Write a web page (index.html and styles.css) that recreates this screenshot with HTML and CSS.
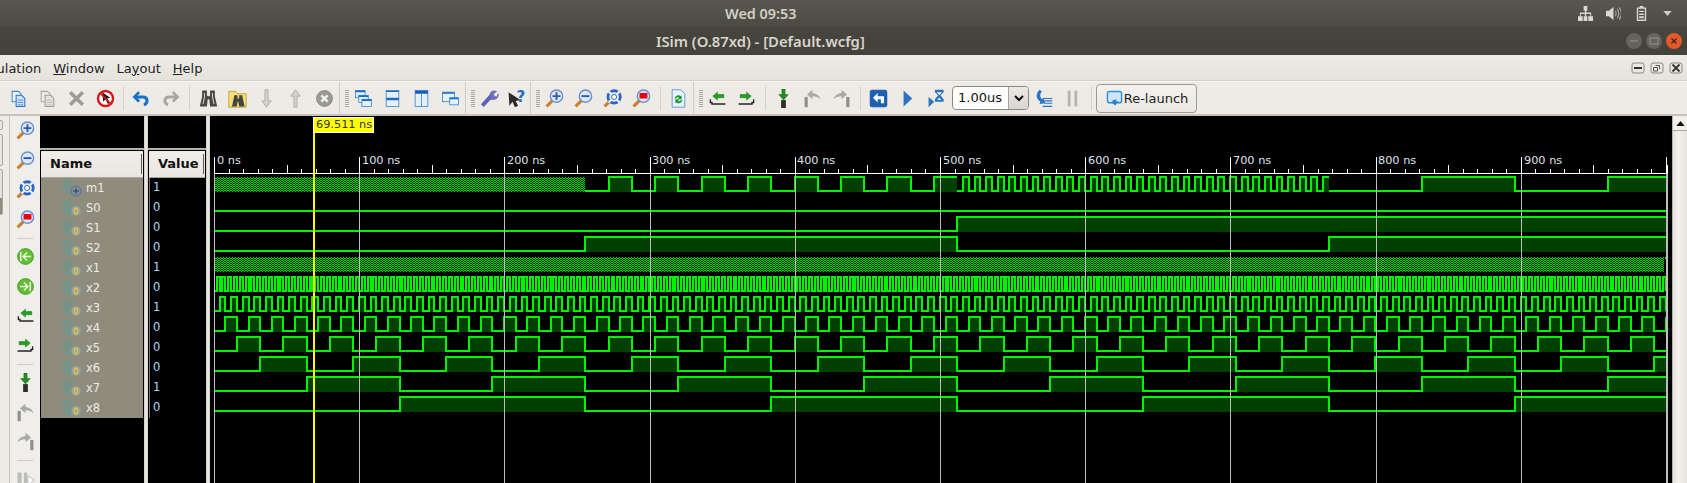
FILE: index.html
```html
<!DOCTYPE html>
<html lang="en">
<head>
<meta charset="utf-8">
<title>ISim (O.87xd) - [Default.wcfg]</title>
<link rel="stylesheet" href="styles.css">
</head>
<body>
<svg class="defs" width="0" height="0" aria-hidden="true">
  <defs>
    <symbol id="doc" viewBox="0 0 24 24"><path d="M4 3h8l3 3v10H4z" fill="#f2f6fc" stroke="#3f86d4" stroke-width="1.300"/><path d="M9 8h7l4 4v10H9z" fill="#d3e4f8" stroke="#2272c8" stroke-width="1.300"/><path d="M11 14h7M11 17h7M11 20h7" stroke="#4a94dc" stroke-width="1.200"/></symbol>
    <symbol id="paste" viewBox="0 0 24 24"><path d="M4 3h8l3 3v10H4z" fill="#ecebe8" stroke="#a8a7a2" stroke-width="1.300"/><path d="M9 8h7l4 4v10H9z" fill="#e4e3df" stroke="#9c9b96" stroke-width="1.300"/><path d="M11 14h7M11 17h7M11 20h7" stroke="#b4b3ae"/></symbol>
    <symbol id="del" viewBox="0 0 24 24"><path d="M4 4l16 16M20 4L4 20" stroke="#9b9b97" stroke-width="4.500"/></symbol>
    <symbol id="no" viewBox="0 0 24 24"><circle cx="12" cy="12" r="9.500" fill="#fff" stroke="#dd1414" stroke-width="3"/><path d="M8 4l1 12 3-3 3 6 2-1-3-6 4-1z" fill="#1c1c1c"/><path d="M6 6l12 12" stroke="#dd1414" stroke-width="2.200"/></symbol>
    <symbol id="undo" viewBox="0 0 24 24"><path d="M9 4L3 10l6 6" fill="none" stroke="#1272cc" stroke-width="3.400"/><path d="M5 10h9c6 0 7 8 1 10" fill="none" stroke="#1272cc" stroke-width="3.800"/></symbol>
    <symbol id="redo" viewBox="0 0 24 24"><path d="M15 4l6 6-6 6" fill="none" stroke="#a6a6a2" stroke-width="3.400"/><path d="M19 10h-9c-6 0-7 8-1 10" fill="none" stroke="#a6a6a2" stroke-width="3.800"/></symbol>
    <symbol id="bino" viewBox="0 0 24 24"><path d="M4 2h6v6l1 1h2l1-1V2h6v7l3 13h-9l-1-9h-2l-1 9H1L4 9z" fill="#474744"/><path d="M7 5v5L5 19M17 5v5l2 9" stroke="#d0d0cc" stroke-width="1.300" fill="none"/></symbol>
    <symbol id="fbino" viewBox="0 0 24 24"><path d="M1 3h9l2 3h11v17H1z" fill="#f6de76" stroke="#b79a2e"/><path d="M8 8h4v4h2V8h4l1 5 2 9h-7l-1-6h-1l-1 6H5l2-9z" fill="#45453f"/></symbol>
    <symbol id="down" viewBox="0 0 24 24"><path d="M10 1h4v14h4l-6 8-6-8h4z" fill="#d2d1cc" stroke="#a8a7a2"/></symbol>
    <symbol id="up" viewBox="0 0 24 24"><path d="M10 23h4V9h4l-6-8-6 8h4z" fill="#d2d1cc" stroke="#a8a7a2"/></symbol>
    <symbol id="stop" viewBox="0 0 24 24"><circle cx="12" cy="12" r="10" fill="#9a9a96" stroke="#7d7d79"/><path d="M8 8l8 8M16 8l-8 8" stroke="#f2f2ee" stroke-width="3"/></symbol>
    <symbol id="w1" viewBox="0 0 24 24"><g fill="#e6f0fb" stroke="#2f82d4"><rect x="2" y="2" width="12" height="9"/><rect x="6" y="8" width="12" height="9"/><rect x="10" y="13" width="12" height="9"/></g><path d="M2 3h12M6 9h12M10 14h12" stroke="#1a6cc0" stroke-width="2"/></symbol>
    <symbol id="w2" viewBox="0 0 24 24"><rect x="4" y="2" width="16" height="20" fill="#e6f0fb" stroke="#2f82d4"/><path d="M4 3h16M4 12h16M4 13.500h16" stroke="#1a6cc0" stroke-width="1.600"/></symbol>
    <symbol id="w3" viewBox="0 0 24 24"><rect x="4" y="2" width="16" height="20" fill="#e6f0fb" stroke="#2f82d4"/><path d="M4 4h16" stroke="#1a5cb0" stroke-width="4"/><path d="M12 5v17" stroke="#2f82d4"/></symbol>
    <symbol id="w4" viewBox="0 0 24 24"><g fill="#e6f0fb" stroke="#2f82d4"><rect x="2" y="4" width="15" height="12"/><rect x="11" y="11" width="11" height="9"/></g><path d="M2 5h15M11 12h11" stroke="#1a6cc0" stroke-width="2"/></symbol>
    <symbol id="wrench" viewBox="0 0 24 24"><path d="M3 21l11-12" stroke="#5e62b4" stroke-width="5"/><path d="M13 10c-2-6 3-9 8-7l-4 3 1 3 3 1 2-4c1 6-5 9-10 7z" fill="#6a6fc0" stroke="#4b4f9e" stroke-width=".6"/></symbol>
    <symbol id="help" viewBox="0 0 24 24"><path d="M2 4l1 17 4-5 3 7 4-2-3-6 6-1z" fill="#2a2a2a"/><text x="12" y="16" font-family="DejaVu Sans" font-weight="700" font-size="19" fill="#1e6fc4">?</text></symbol>
    <symbol id="lens" viewBox="0 0 24 24"><path d="M2 22l8-8" stroke="#cb7f2a" stroke-width="3.800"/><circle cx="14.500" cy="9" r="7.800" fill="#dde8f8" stroke="#6c8fd0" stroke-width="1.800"/></symbol>
    <symbol id="zi" viewBox="0 0 24 24"><use href="#lens"/><path d="M9.500 9h10M14.500 4v10" stroke="#2b5bb0" stroke-width="2.400"/></symbol>
    <symbol id="zo" viewBox="0 0 24 24"><use href="#lens"/><path d="M9.500 9h10" stroke="#2b5bb0" stroke-width="2.400"/></symbol>
    <symbol id="zf" viewBox="0 0 24 24"><use href="#lens"/><circle cx="14" cy="10" r="9.500" fill="#2d64c4"/><circle cx="14" cy="10" r="6" fill="#e8f0fb"/><path d="M7 3l14 14M21 3L7 17" stroke="#e8f0fb" stroke-width="2.800"/><circle cx="14" cy="10" r="3.200" fill="#fff" stroke="#2d64c4" stroke-width="1.200"/></symbol>
    <symbol id="zr" viewBox="0 0 24 24"><use href="#lens"/><rect x="9.500" y="5" width="10" height="7" fill="#e8000c"/></symbol>
    <symbol id="refresh" viewBox="0 0 24 24"><path d="M4 1h11l5 5v17H4z" fill="#eaf3fd" stroke="#3d8ad6"/><path d="M7 12a5 5 0 0 1 8-3l1-1v5h-5l2-2a3 3 0 0 0-4 1zM17 14a5 5 0 0 1-8 3l-1 1v-5h5l-2 2a3 3 0 0 0 4-1z" fill="#1a9a2c"/></symbol>
    <symbol id="tl" viewBox="0 0 24 24"><path d="M3 13v4h2v2h17" fill="none" stroke="#262626" stroke-width="1.700"/><path d="M12 4L6 9l6 5v-3h8V7h-8z" fill="#22a11e" stroke="#146e12" stroke-width=".6"/></symbol>
    <symbol id="tr" viewBox="0 0 24 24"><path d="M21 13v4h-2v2H2" fill="none" stroke="#262626" stroke-width="1.700"/><path d="M12 4l6 5-6 5v-3H4V7h8z" fill="#22a11e" stroke="#146e12" stroke-width=".6"/></symbol>
    <symbol id="gd" viewBox="0 0 24 24"><path d="M10 0h4v7h4l-6 7-6-7h4z" fill="#1f8f1f" stroke="#0f5f0f" stroke-width=".6"/><rect x="9" y="14" width="6" height="10" fill="#2e2e2c"/></symbol>
    <symbol id="gl" viewBox="0 0 24 24"><path d="M12 1L5 7l7 6V9c4 0 8 1 10 4-1-5-5-7-10-8z" fill="#a9a9a5"/><rect x="2" y="10" width="4" height="13" fill="#8f8f8b"/></symbol>
    <symbol id="gr" viewBox="0 0 24 24"><path d="M12 1l7 6-7 6V9C8 9 4 10 2 13c1-5 5-7 10-8z" fill="#a9a9a5"/><rect x="18" y="10" width="4" height="13" fill="#8f8f8b"/></symbol>
    <symbol id="back" viewBox="0 0 24 24"><rect x="1.500" y="1.500" width="21" height="21" rx="2" fill="#1a60b4" stroke="#134a8e"/><path d="M11 5l-6 6 6 6v-4h4v5h4v-9h-8z" fill="#fff"/></symbol>
    <symbol id="play" viewBox="0 0 24 24"><path d="M7 2l11 10L7 22z" fill="#2a74c2"/></symbol>
    <symbol id="runfor" viewBox="0 0 24 24"><path d="M2 10l7 6-7 7z" fill="#2a74c2"/><path d="M10 1h11v3l-4 4 4 5v3H10v-3l4-5-4-4z" fill="#2a74c2"/><path d="M12 4h7l-3.500 3.500zM13 14h5l-2.500-3z" fill="#fff"/></symbol>
    <symbol id="next" viewBox="0 0 24 24"><path d="M7 1c-5 5-5 11 1 15l-1 3 7-1-2-7-1 2c-4-2-4-7-1-10z" fill="#2a74c2"/><path d="M11 12h12M13 15h10M13 18h10M11 22h12" stroke="#2a74c2" stroke-width="1.500"/></symbol>
    <symbol id="pause" viewBox="0 0 24 24"><rect x="6" y="2" width="3.500" height="20" fill="#b5b5b0"/><rect x="14.500" y="2" width="3.500" height="20" fill="#b5b5b0"/></symbol>
    <symbol id="relaunch" viewBox="0 0 24 24"><rect x="2" y="2" width="20" height="16" rx="3" fill="#cfe6fa" stroke="#2f90e0" stroke-width="2"/><path d="M8 15l7-2-1 3 4 0-5 6-6-5h3z" fill="#2a7fd0"/></symbol>
    <symbol id="gb" viewBox="0 0 24 24"><circle cx="12" cy="12" r="10" fill="#62bf33" stroke="#3a9018"/><path d="M6 6v12M19 12H9M14 7l-5 5 5 5" fill="none" stroke="#eaf8e0" stroke-width="2"/></symbol>
    <symbol id="gn" viewBox="0 0 24 24"><circle cx="12" cy="12" r="10" fill="#62bf33" stroke="#3a9018"/><path d="M18 6v12M5 12h10M10 7l5 5-5 5" fill="none" stroke="#eaf8e0" stroke-width="2"/></symbol>
    <symbol id="end" viewBox="0 0 24 24"><path d="M2 3h5v18H2zM10 3h4v18h-4z" fill="#bdbdb8"/><path d="M15 7l8 6-8 6z" fill="#fff" stroke="#a8a8a4"/></symbol>
    <symbol id="bit" viewBox="0 0 20 18"><path d="M1 14V2h3v12h3V2h3" fill="none" stroke="#5f9c90" stroke-width="1.400"/><path d="M2 15h7" stroke="#6f9f93"/><circle cx="13" cy="12" r="5" fill="#a6a389" stroke="#7a9aa0"/><ellipse cx="13" cy="12" rx="1.600" ry="2.800" fill="none" stroke="#d8c560" stroke-width="1.200"/></symbol>
    <symbol id="bus" viewBox="0 0 20 18"><path d="M1 14V2h3v12h3V2h3" fill="none" stroke="#5f9c90" stroke-width="1.400"/><circle cx="13" cy="12" r="5" fill="#7f8f9f" stroke="#56708c"/><path d="M10 12h6M13 9v6" stroke="#2e3f55"/></symbol>
    <pattern id="hatch" width="3" height="2" patternUnits="userSpaceOnUse"><rect width="3" height="2" fill="#001c00"/><rect width="1" height="1" fill="#00e000"/><rect x="2" width="1" height="1" fill="#00e000"/><rect x="1" y="1" width="1" height="1" fill="#00e000"/></pattern>
  </defs>
</svg>

<div class="app">
  <header class="panel">
    <span class="clock">Wed 09:53</span>
    <div class="tray">
      <svg class="tray-ic" viewBox="0 0 16 16"><path d="M6 0h4v5H9v2h5v4h2v5h-5v-5h2V8.500H8.700V11H10v5H6v-5h1.300V8.500H3V11h2v5H0v-5h2V7h5.500V5H6z" fill="#dbd8d0"/></svg>
      <svg class="tray-ic" viewBox="0 0 16 16"><path d="M0 5h3l5-4v14l-5-4H0z" fill="#dbd8d0"/><path d="M10 5c1 2 1 4 0 6M12 3c2 3 2 7 0 10M14 1.500c3 4 3 9 0 13" fill="none" stroke="#a9a69e" stroke-width="1.200"/></svg>
      <svg class="tray-ic" viewBox="0 0 16 16"><path d="M6 0h4v1.500h3V16H3V1.500h3z" fill="#dbd8d0"/><path d="M4.500 3h7v11.500h-7z" fill="#4f4d46"/><path d="M5.500 5h5v1.500h-5zM5.500 8h5v1.500h-5zM5.500 11h5v2h-5z" fill="#dbd8d0"/></svg>
      <svg class="tray-arrow" viewBox="0 0 10 6"><path d="M0 0h10L5 6z" fill="#cfccc4"/></svg>
    </div>
  </header>

  <div class="titlebar">
    <span class="title">ISim (O.87xd) - [Default.wcfg]</span>
    <div class="winbtns">
      <span class="wb"><svg viewBox="0 0 16 16"><path d="M4 8h8" stroke="#8a8880" stroke-width="1.400"/></svg></span>
      <span class="wb"><svg viewBox="0 0 16 16"><rect x="4" y="5" width="8" height="6" fill="none" stroke="#8a8880" stroke-width="1.300"/></svg></span>
      <span class="wb wb-close"><svg viewBox="0 0 16 16"><path d="M5.500 5.500l5 5M10.500 5.500l-5 5" stroke="#4a2015" stroke-width="1.300"/></svg></span>
    </div>
  </div>

  <nav class="menubar">
    <span class="menu menu-cut">Simulation</span>
    <span class="menu"><u>W</u>indow</span>
    <span class="menu">La<u>y</u>out</span>
    <span class="menu"><u>H</u>elp</span>
    <div class="mdi">
      <span class="mb"><svg viewBox="0 0 18 16"><rect x="3" y="3" width="12" height="10" rx="2" fill="none" stroke="#8a8880"/><path d="M5 8h8" stroke="#333" stroke-width="2"/></svg></span>
      <span class="mb"><svg viewBox="0 0 18 16"><rect x="3" y="3" width="12" height="10" rx="2" fill="none" stroke="#8a8880"/><path d="M7.500 5.500h4v3.500M5.500 7.500h4v3.500h-4z" fill="none" stroke="#555"/></svg></span>
      <span class="mb"><svg viewBox="0 0 18 16"><rect x="3" y="3" width="12" height="10" rx="2" fill="none" stroke="#8a8880"/><path d="M5.500 4.500l7 7M12.500 4.500l-7 7" stroke="#333" stroke-width="1.800"/></svg></span>
    </div>
  </nav>

  <div class="toolbar">
    <span class="tb"><svg class="ic"><use href="#doc"/></svg></span>
    <span class="tb"><svg class="ic"><use href="#paste"/></svg></span>
    <span class="tb"><svg class="ic"><use href="#del"/></svg></span>
    <span class="tb"><svg class="ic"><use href="#no"/></svg></span>
    <span class="sep sep-7"></span>
    <span class="tb"><svg class="ic"><use href="#undo"/></svg></span>
    <span class="tb"><svg class="ic"><use href="#redo"/></svg></span>
    <span class="sep sep-9"></span>
    <span class="tb"><svg class="ic"><use href="#bino"/></svg></span>
    <span class="tb"><svg class="ic"><use href="#fbino"/></svg></span>
    <span class="tb"><svg class="ic"><use href="#down"/></svg></span>
    <span class="tb"><svg class="ic"><use href="#up"/></svg></span>
    <span class="tb"><svg class="ic"><use href="#stop"/></svg></span>
    <span class="grip"></span>
    <span class="tb"><svg class="ic"><use href="#w1"/></svg></span>
    <span class="tb"><svg class="ic"><use href="#w2"/></svg></span>
    <span class="tb"><svg class="ic"><use href="#w3"/></svg></span>
    <span class="tb"><svg class="ic"><use href="#w4"/></svg></span>
    <span class="grip"></span>
    <span class="tb tb-28"><svg class="ic"><use href="#wrench"/></svg></span>
    <span class="tb tb-27"><svg class="ic"><use href="#help"/></svg></span>
    <span class="grip"></span>
    <span class="tb"><svg class="ic"><use href="#zi"/></svg></span>
    <span class="tb"><svg class="ic"><use href="#zo"/></svg></span>
    <span class="tb"><svg class="ic"><use href="#zf"/></svg></span>
    <span class="tb"><svg class="ic"><use href="#zr"/></svg></span>
    <span class="sep sep-8"></span>
    <span class="tb"><svg class="ic"><use href="#refresh"/></svg></span>
    <span class="grip"></span>
    <span class="tb"><svg class="ic"><use href="#tl"/></svg></span>
    <span class="tb"><svg class="ic"><use href="#tr"/></svg></span>
    <span class="sep sep-8"></span>
    <span class="tb"><svg class="ic"><use href="#gd"/></svg></span>
    <span class="tb"><svg class="ic"><use href="#gl"/></svg></span>
    <span class="tb"><svg class="ic"><use href="#gr"/></svg></span>
    <span class="sep sep-8"></span>
    <span class="tb"><svg class="ic"><use href="#back"/></svg></span>
    <span class="tb"><svg class="ic"><use href="#play"/></svg></span>
    <span class="tb"><svg class="ic"><use href="#runfor"/></svg></span>
    <div class="combo"><span class="combo-val">1.00us</span><span class="combo-btn"><svg viewBox="0 0 10 7"><path d="M1 1l4 4 4-4" fill="none" stroke="#111" stroke-width="2"/></svg></span></div>
    <span class="tb"><svg class="ic"><use href="#next"/></svg></span>
    <span class="tb"><svg class="ic"><use href="#pause"/></svg></span>
    <span class="sep sep-9"></span>
    <button class="relaunch"><svg class="ic-sm"><use href="#relaunch"/></svg>Re-launch</button>
  </div>

  <main class="main">
    <div class="edge">
      <span class="edge-box edge-a"></span>
      <span class="edge-box edge-b"></span>
      <span class="edge-box edge-c"></span>
    </div>
    <aside class="strip">
      <span class="st"><svg class="ic"><use href="#zi"/></svg></span>
      <span class="st"><svg class="ic"><use href="#zo"/></svg></span>
      <span class="st"><svg class="ic"><use href="#zf"/></svg></span>
      <span class="st"><svg class="ic"><use href="#zr"/></svg></span>
      <span class="st-div"></span>
      <span class="st"><svg class="ic"><use href="#gb"/></svg></span>
      <span class="st"><svg class="ic"><use href="#gn"/></svg></span>
      <span class="st"><svg class="ic"><use href="#tl"/></svg></span>
      <span class="st"><svg class="ic"><use href="#tr"/></svg></span>
      <span class="st-div"></span>
      <span class="st"><svg class="ic"><use href="#gd"/></svg></span>
      <span class="st"><svg class="ic"><use href="#gl"/></svg></span>
      <span class="st"><svg class="ic"><use href="#gr"/></svg></span>
      <span class="st-div"></span>
      <span class="st"><svg class="ic"><use href="#end"/></svg></span>
    </aside>

    <section class="names">
      <div class="pane-top"></div>
      <div class="hdr hdr-name">Name<span class="hdr-grip"></span></div>
      <ul class="rows">
        <li class="row"><svg class="bit"><use href="#bus"/></svg>m1</li>
        <li class="row"><svg class="bit"><use href="#bit"/></svg>S0</li>
        <li class="row"><svg class="bit"><use href="#bit"/></svg>S1</li>
        <li class="row"><svg class="bit"><use href="#bit"/></svg>S2</li>
        <li class="row"><svg class="bit"><use href="#bit"/></svg>x1</li>
        <li class="row"><svg class="bit"><use href="#bit"/></svg>x2</li>
        <li class="row"><svg class="bit"><use href="#bit"/></svg>x3</li>
        <li class="row"><svg class="bit"><use href="#bit"/></svg>x4</li>
        <li class="row"><svg class="bit"><use href="#bit"/></svg>x5</li>
        <li class="row"><svg class="bit"><use href="#bit"/></svg>x6</li>
        <li class="row"><svg class="bit"><use href="#bit"/></svg>x7</li>
        <li class="row"><svg class="bit"><use href="#bit"/></svg>x8</li>
      </ul>
    </section>
    <div class="split"></div>
    <section class="values">
      <div class="pane-top"></div>
      <div class="hdr hdr-value">Value<span class="hdr-grip"></span></div>
      <ul class="vals">
        <li>1</li><li>0</li><li>0</li><li>0</li><li>1</li><li>0</li><li>1</li><li>0</li><li>0</li><li>0</li><li>1</li><li>0</li>
      </ul>
    </section>
    <div class="split"></div>

    <section class="wave">
      <svg id="wave" class="wave-svg" width="1462" height="367" viewBox="210 116 1462 367" shape-rendering="crispEdges">
        <g id="signals"></g>
        <g id="grid"></g>
        <g class="ruler">
          <text x="217" y="164">0 ns</text>
          <text x="362" y="164">100 ns</text>
          <text x="507" y="164">200 ns</text>
          <text x="652" y="164">300 ns</text>
          <text x="797" y="164">400 ns</text>
          <text x="943" y="164">500 ns</text>
          <text x="1088" y="164">600 ns</text>
          <text x="1233" y="164">700 ns</text>
          <text x="1378" y="164">800 ns</text>
          <text x="1524" y="164">900 ns</text>
        </g>
        <rect x="313" y="132" width="2" height="351" fill="#ffff00"/>
      </svg>
      <span class="cursor-label">69.511 ns</span>
    </section>

    <div class="scrollbar">
      <span class="sb-up"><svg viewBox="0 0 10 6"><path d="M0 6L5 0l5 6z" fill="#111"/></svg></span>
    </div>
  </main>
</div>
<script src="waves.js"></script>
</body>
</html>
```
FILE: styles.css
```css
* { box-sizing: border-box; }
html, body { margin: 0; padding: 0; height: 100%; overflow: hidden; background: #000; }
body { font-family: "DejaVu Sans", sans-serif; }
.defs { position: absolute; }
.app { display: flex; flex-direction: column; width: 1687px; height: 483px; overflow: hidden; }

.panel { flex: 0 0 27px; display: flex; align-items: center; padding-left: 725px; background: linear-gradient(#5a5750, #4c4a43); }
.clock { font: 600 14.400px "Noto Sans", sans-serif; color: #d3cfc6; }
.tray { margin-left: auto; display: flex; align-items: center; padding-right: 15px; }
.tray-ic { width: 15px; height: 15px; margin-right: 13px; }
.tray-arrow { width: 9px; height: 5px; margin-left: 1px; }

.titlebar { flex: 0 0 28px; display: flex; align-items: center; padding-left: 656px; background: linear-gradient(#46453e, #42413a); }
.title { font: 600 14.800px "Noto Sans", sans-serif; color: #d9d5cc; white-space: nowrap; }
.winbtns { margin-left: auto; display: flex; gap: 4px; padding-right: 5px; }
.wb { width: 16px; height: 16px; border-radius: 50%; background: #65635c; display: flex; }
.wb-close { background: #e25a2c; }

.menubar { flex: 0 0 26px; display: flex; align-items: center; padding-top: 1px; overflow: hidden; background: linear-gradient(#edebe6, #e6e3dd); border-bottom: 1px solid #d2cfc9; font-size: 13px; color: #222; }
.menu { margin-right: 12px; white-space: nowrap; }
.menu-cut { margin-left: -28px; }
.mdi { margin-left: auto; display: flex; gap: 1px; padding-right: 2px; }
.mb { width: 18px; height: 16px; display: flex; }
.mb svg { width: 18px; height: 16px; }

.toolbar { flex: 0 0 35px; display: flex; align-items: center; padding: 0 0 0 4px; background: #eeebe7; border-bottom: 2px solid #c6c3bd; border-top: 1px solid #f8f6f3; }
.tb { flex: 0 0 29px; display: flex; justify-content: center; align-items: center; }
.tb-28 { flex-basis: 28px; }
.tb-27 { flex-basis: 27px; }
.ic { width: 19px; height: 19px; display: block; }
.ic-sm { width: 17px; height: 17px; margin-right: 1px; }
.sep { height: 24px; background: linear-gradient(#d6d3cd, #d6d3cd) center / 1px 100% no-repeat; }
.sep-7 { flex: 0 0 7px; }
.sep-8 { flex: 0 0 8px; }
.sep-9 { flex: 0 0 9px; }
.grip { flex: 0 0 10px; align-self: stretch; border-left: 1px solid #cfccc6; background: repeating-linear-gradient(#a9a7a1 0 1px, #eeebe7 1px 2px) 5px 8px / 4px 18px no-repeat; }
.combo { flex: 0 0 77px; margin-left: 1px; height: 24px; display: flex; background: #fff; border: 1px solid #8a8780; border-radius: 4px; overflow: hidden; font-size: 13px; color: #111; }
.combo-val { flex: 1; padding-left: 5px; line-height: 22px; }
.combo-btn { flex: 0 0 20px; display: flex; align-items: center; justify-content: center; background: linear-gradient(#ece9e4, #d9d6d0); border-left: 1px solid #a8a59e; }
.combo-btn svg { width: 10px; height: 7px; }
.relaunch { flex: 0 0 101px; height: 29px; display: flex; align-items: center; justify-content: center; padding: 0 0 0 1px; font: 13px "DejaVu Sans", sans-serif; color: #222; background: linear-gradient(#f4f2ef, #ebe8e3); border: 1px solid #9c9992; border-radius: 4px; }

.main { flex: 1; display: flex; min-height: 0; background: #000; }
.edge { flex: 0 0 10px; display: flex; flex-direction: column; background: #eeebe7; border-right: 1px solid #c9c6c0; }
.edge-box { display: block; margin-left: -4px; width: 7px; border: 1px solid #aaa7a0; border-radius: 2px; background: #e9e6e1; }
.edge-a { height: 10px; margin-top: 4px; }
.edge-b { height: 32px; margin-top: 4px; }
.edge-c { height: 46px; margin-top: 3px; background: #e4e1dc linear-gradient(#e4e1dc 28px, #8f8c7e 28px 45px); }
.strip { flex: 0 0 30px; display: flex; flex-direction: column; background: #f0eeea; overflow: hidden; }
.st { flex: 0 0 29.500px; display: flex; align-items: center; justify-content: center; }
.st-div { flex: 0 0 8px; background: linear-gradient(#cfccc6, #cfccc6) center / 16px 1px no-repeat; }

.names { flex: 0 0 104px; display: flex; flex-direction: column; background: #000; }
.values { flex: 0 0 58px; display: flex; flex-direction: column; background: #000; }
.pane-top { flex: 0 0 34px; border-bottom: 2px solid #b5b2ac; }
.hdr { flex: 0 0 26px; position: relative; margin-top: 1px; font-weight: 700; font-size: 13px; line-height: 26px; color: #111; background: linear-gradient(#f0eee9, #e9e6e0); border-bottom: 1px solid #a9a69f; }
.hdr-name { margin: 1px 1px 0; padding-left: 9px; }
.hdr-value { margin: 1px 1px 0 1px; padding-left: 9px; }
.hdr-grip { position: absolute; right: 1px; top: 3px; bottom: 3px; width: 1px; background: #5a5853; }
.rows { list-style: none; margin: 0 1px; padding: 0; background: #8f8c7e; }
.row { height: 20px; display: flex; align-items: center; padding: 0 0 1px 22px; font-size: 11.500px; color: #ecebe4; }
.bit { width: 20px; height: 18px; margin: 1px 3px 0 0; flex: none; }
.vals { list-style: none; margin: 0 0 0 1px; padding: 0 0 0 3px; border-left: 1px solid #77756f; }
.vals li { height: 20px; line-height: 19px; font-size: 11.500px; color: #a8d8f0; }
.split { flex: 0 0 4px; background: linear-gradient(90deg, #c9c6c0, #f4f2ee 50%, #c9c6c0); }
.wave { flex: 1; position: relative; overflow: hidden; background: #000; }
.wave-svg { display: block; }
.ruler text { font: 11.300px "DejaVu Sans", sans-serif; fill: #dfe4ea; }
.cursor-label { position: absolute; left: 103px; top: 1px; height: 16px; width: 61px; padding-left: 2px; font-size: 11.300px; line-height: 14px; color: #333; background: #ffff00; border: 1px solid #fff; white-space: nowrap; }
.scrollbar { flex: 0 0 15px; background: linear-gradient(90deg, #e6e3dd, #f4f2ee 40%, #e6e3dd); border-left: 1px solid #b5b2ac; }
.sb-up { display: flex; align-items: center; justify-content: center; height: 15px; background: #f2f0ec; border-bottom: 1px solid #a9a69f; }
.sb-up svg { width: 9px; height: 5px; }
```
FILE: waves.js
```js
(function () {
  var NS = 'http://www.w3.org/2000/svg';
  var signals = document.getElementById('signals');
  var grid = document.getElementById('grid');
  var ROW0_HI = 177, ROW0_LO = 191, PITCH = 20, T_END = 1000.5;
  var GREEN = '#00f400', FILL = '#003f00', GRID = '#bdbdbd', AXIS = '#ffffff';

  function X(t) { return Math.round(213.7 + 1.452 * t); }
  function add(parent, tag, attrs) {
    var el = document.createElementNS(NS, tag);
    for (var k in attrs) el.setAttribute(k, attrs[k]);
    parent.appendChild(el);
    return el;
  }

  // level(t) returns 0/1; edges is the sorted list of change times.
  function drawDigital(row, t0, t1, edges, level) {
    var hi = ROW0_HI + row * PITCH, lo = ROW0_LO + row * PITCH;
    var times = [t0].concat(edges.filter(function (e) { return e > t0 && e < t1; }), [t1]);
    var line = '', fill = '';
    for (var i = 0; i + 1 < times.length; i++) {
      var a = X(times[i]), b = X(times[i + 1]);
      var on = level((times[i] + times[i + 1]) / 2);
      var y = on ? hi : lo;
      line += (i === 0 ? 'M' + a + ' ' + y : 'V' + y) + 'H' + b;
      if (on) fill += 'M' + a + ' ' + hi + 'H' + b + 'V' + (lo + 1) + 'H' + a + 'Z';
    }
    if (fill) add(signals, 'path', { d: fill, fill: FILL });
    add(signals, 'path', { d: line, fill: 'none', stroke: GREEN, 'stroke-width': 2 });
  }

  function clockEdges(half) {
    var out = [];
    for (var t = half; t < T_END; t += half) out.push(t);
    return out;
  }
  function clock(half) {
    return function (t) { return Math.floor(t / half) % 2; };
  }
  function drawClock(row, half, t0, t1) {
    drawDigital(row, t0, t1, clockEdges(half), clock(half));
  }
  function hatch(row, t0, t1) {
    add(signals, 'rect', {
      x: X(t0), y: ROW0_HI + row * PITCH, width: X(t1) - X(t0), height: 15, fill: 'url(#hatch)'
    });
  }

  // m1 is the mux of x1 / x5 / x3 / x7 under S2 S1 S0
  hatch(0, 0, 256);
  drawClock(0, 16, 256, 512);
  drawClock(0, 4, 512, 768);
  drawClock(0, 64, 768, T_END);

  drawDigital(1, 0, T_END, [], function () { return 0; });
  drawDigital(2, 0, T_END, [512], function (t) { return t > 512 ? 1 : 0; });
  drawDigital(3, 0, T_END, [256, 512, 768], function (t) { return (t > 256 && t < 512) || t > 768 ? 1 : 0; });

  hatch(4, 0, 999);
  add(signals, 'rect', { x: 1665, y: 257, width: 2, height: 2, fill: GREEN });

  drawClock(5, 2, 0, T_END);
  drawClock(6, 4, 0, T_END);
  drawClock(7, 8, 0, T_END);
  drawClock(8, 16, 0, T_END);
  drawClock(9, 32, 0, T_END);
  drawClock(10, 64, 0, T_END);
  drawClock(11, 128, 0, T_END);

  // ruler and vertical grid, laid over the signals
  add(grid, 'rect', { x: 214, y: 173, width: 1454, height: 1, fill: AXIS });
  for (var n = 0; n <= 100; n++) {
    var x = Math.floor(214.5 + 14.52 * n);
    if (n % 10 === 0) {
      add(grid, 'rect', { x: x, y: 157, width: 1, height: 17, fill: AXIS });
      add(grid, 'rect', { x: x, y: 174, width: 1, height: 309, fill: GRID });
    } else {
      var tall = n % 5 === 0;
      add(grid, 'rect', { x: x, y: tall ? 165 : 169, width: 1, height: tall ? 8 : 4, fill: AXIS });
    }
  }
  add(grid, 'rect', { x: 1667, y: 165, width: 1, height: 8, fill: AXIS });
  add(grid, 'rect', { x: 1667, y: 174, width: 1, height: 309, fill: GRID });
})();
```
